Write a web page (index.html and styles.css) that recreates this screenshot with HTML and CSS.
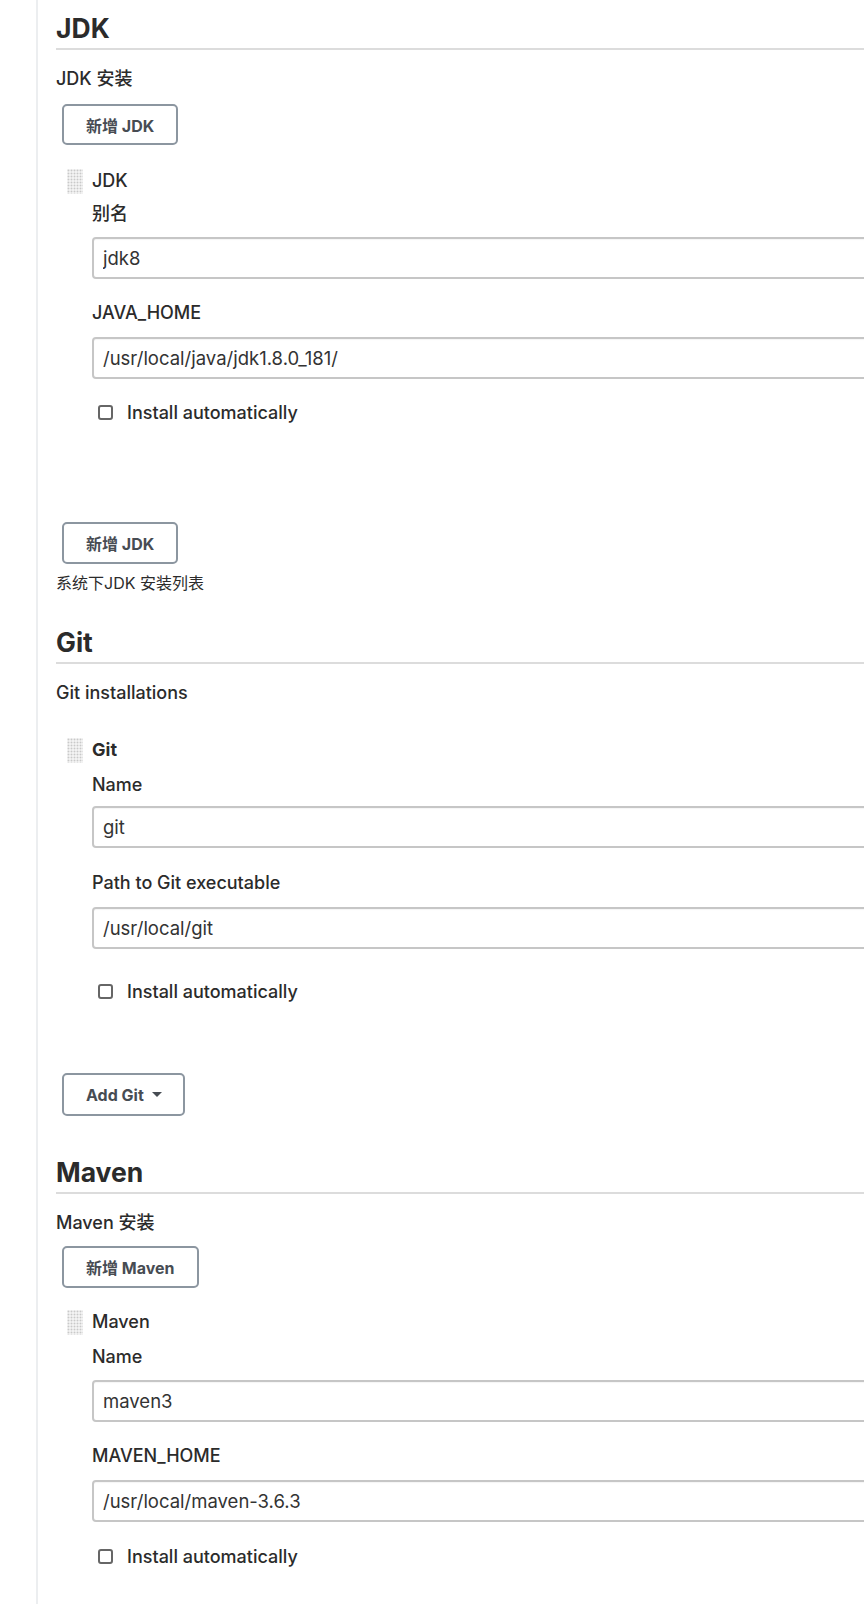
FILE: index.html
```html
<!DOCTYPE html>
<html lang="zh">
<head>
<meta charset="utf-8">
<title>Global Tool Configuration</title>
<link rel="stylesheet" href="styles.css">
</head>
<body>
<div class="page">
  <div class="main">

    <section class="section section-jdk">
      <h2 class="section-title">JDK</h2>
      <div class="group-label">JDK 安装</div>
      <button class="btn btn-top" type="button">新增 JDK</button>
      <div class="tool tool-jdk">
        <div class="tool-head">
          <span class="handle"><svg width="16" height="25" viewBox="0 0 16 25"><defs><pattern id="d1" width="3" height="3" patternUnits="userSpaceOnUse"><rect x="0.5" y="0.5" width="2" height="2" fill="#c9c9c9"/></pattern></defs><rect width="16" height="25" fill="url(#d1)"/></svg></span>
          <span class="tool-name">JDK</span>
        </div>
        <div class="field-label first">别名</div>
        <input class="text-input" type="text" value="jdk8">
        <div class="field-label">JAVA_HOME</div>
        <input class="text-input" type="text" value="/usr/local/java/jdk1.8.0_181/">
        <label class="check-row"><span class="checkbox"></span><span>Install automatically</span></label>
      </div>
      <button class="btn btn-bottom" type="button">新增 JDK</button>
      <div class="help-text">系统下JDK 安装列表</div>
    </section>

    <section class="section section-git">
      <h2 class="section-title">Git</h2>
      <div class="group-label">Git installations</div>
      <div class="tool tool-git">
        <div class="tool-head">
          <span class="handle"><svg width="16" height="25" viewBox="0 0 16 25"><defs><pattern id="d2" width="3" height="3" patternUnits="userSpaceOnUse"><rect x="0.5" y="0.5" width="2" height="2" fill="#c9c9c9"/></pattern></defs><rect width="16" height="25" fill="url(#d2)"/></svg></span>
          <span class="tool-name bold">Git</span>
        </div>
        <div class="field-label first">Name</div>
        <input class="text-input" type="text" value="git">
        <div class="field-label">Path to Git executable</div>
        <input class="text-input" type="text" value="/usr/local/git">
        <label class="check-row"><span class="checkbox"></span><span>Install automatically</span></label>
      </div>
      <button class="btn btn-add" type="button">Add Git <span class="caret"></span></button>
    </section>

    <section class="section section-maven">
      <h2 class="section-title">Maven</h2>
      <div class="group-label">Maven 安装</div>
      <button class="btn btn-top" type="button">新增 Maven</button>
      <div class="tool tool-maven">
        <div class="tool-head">
          <span class="handle"><svg width="16" height="25" viewBox="0 0 16 25"><defs><pattern id="d3" width="3" height="3" patternUnits="userSpaceOnUse"><rect x="0.5" y="0.5" width="2" height="2" fill="#c9c9c9"/></pattern></defs><rect width="16" height="25" fill="url(#d3)"/></svg></span>
          <span class="tool-name">Maven</span>
        </div>
        <div class="field-label first">Name</div>
        <input class="text-input" type="text" value="maven3">
        <div class="field-label">MAVEN_HOME</div>
        <input class="text-input" type="text" value="/usr/local/maven-3.6.3">
        <label class="check-row"><span class="checkbox"></span><span>Install automatically</span></label>
      </div>
    </section>

  </div>
</div>
</body>
</html>
```

FILE: styles.css
```css
html, body {
  margin: 0;
  padding: 0;
  overflow: hidden;
  background: #fff;
}

body {
  font-family: Inter, "Liberation Sans", "Noto Sans CJK SC", sans-serif;
  color: #2b2b2b;
  width: 864px;
  height: 1604px;
}

.page {
  height: 1604px;
  overflow: hidden;
}

.main {
  margin-left: 36px;
  border-left: 2px solid #eceef0;
  padding-left: 18px;
  height: 1604px;
  width: 900px;
}

/* Section headings */
.section-title {
  margin: 0;
  font-size: 26.5px;
  line-height: 32px;
  font-weight: 700;
  color: #2b2b2b;
  padding-bottom: 4px;
  border-bottom: 2px solid #dcdcdc;
}
.section-jdk .section-title { padding-top: 12px; }
.section-git { margin-top: 33px; }
.section-maven { margin-top: 40px; }

.group-label {
  font-size: 18px;
  font-weight: 500;
  line-height: 24px;
  margin-top: 17px;
}

/* Buttons */
.btn {
  display: flex;
  align-items: center;
  box-sizing: border-box;
  margin-left: 6px;
  height: 42px;
  padding: 0 22px;
  background: #fff;
  border: 2px solid #8c96a0;
  border-radius: 5px;
  font-family: Inter, "Liberation Sans", "Noto Sans CJK SC", sans-serif;
  font-size: 16px;
  font-weight: 700;
  color: #474c53;
}
.btn-top { margin-top: 13px; height: 41px; }
.section-maven .btn-top { margin-top: 11px; height: 42px; }
.btn-bottom { margin-top: 98px; }
.btn-add {
  margin-top: 70px;
  height: 43px;
  gap: 8px;
  padding-right: 21px;
}
.caret {
  display: block;
  width: 0;
  height: 0;
  border-left: 5px solid transparent;
  border-right: 5px solid transparent;
  border-top: 5px solid #474c53;
}

/* Tool entries */
.tool { padding-left: 36px; }
.tool-jdk { margin-top: 24px; }
.tool-git { margin-top: 33px; }
.tool-maven { margin-top: 22px; }

.tool-head {
  display: flex;
  align-items: center;
  margin-left: -25px;
  height: 24px;
  gap: 9px;
}
.handle {
  display: block;
  width: 16px;
  height: 25px;
}
.handle svg { display: block; }
.tool-name { font-size: 18px; font-weight: 500; line-height: 24px; }
.tool-name.bold { font-weight: 700; }

.field-label {
  font-size: 18px;
  font-weight: 500;
  line-height: 24px;
  margin-top: 22px;
}
.field-label.first { margin-top: 9px; }
.tool-git .field-label.first,
.tool-maven .field-label.first { margin-top: 11px; }
.tool-git .field-label { margin-top: 23px; }
.tool-git .field-label.first { margin-top: 11px; }

.text-input {
  display: block;
  box-sizing: border-box;
  width: 820px;
  height: 42px;
  margin-top: 12px;
  padding: 0 9px;
  border: 2px solid #c6c6c6;
  border-radius: 4px;
  box-shadow: inset 0 1px 1px rgba(0, 0, 0, 0.04);
  font-family: Inter, "Liberation Sans", sans-serif;
  font-size: 18.5px;
  color: #333;
  background: #fff;
}
.field-label.first + .text-input { margin-top: 11px; }
.tool-git .field-label.first + .text-input { margin-top: 9px; }

/* Checkbox rows */
.check-row {
  display: flex;
  align-items: center;
  gap: 14px;
  margin-top: 21px;
  padding-left: 6px;
  height: 24px;
  font-size: 18px;
  font-weight: 500;
}
.tool-git .check-row { margin-top: 30px; }
.tool-maven .check-row { margin-top: 22px; }

.checkbox {
  display: block;
  box-sizing: border-box;
  width: 15px;
  height: 15px;
  border: 2px solid #666;
  border-radius: 3px;
}

.help-text {
  font-size: 16px;
  line-height: 20px;
  margin-top: 9px;
}
```
